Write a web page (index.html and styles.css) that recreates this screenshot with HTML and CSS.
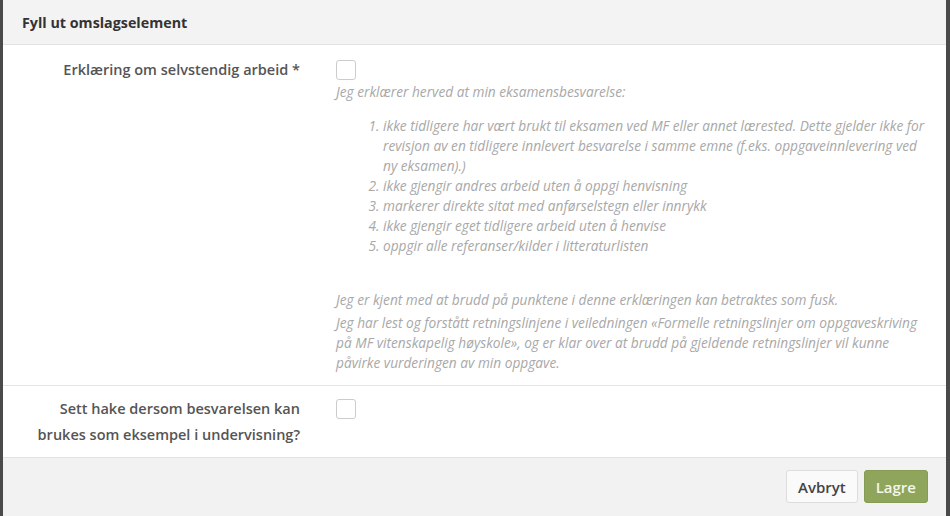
FILE: index.html
```html
<!DOCTYPE html>
<html lang="no">
<head>
  <meta charset="UTF-8">
  <meta name="viewport" content="width=device-width, initial-scale=1">
  <title>Fyll ut omslagselement</title>
  <link rel="stylesheet" href="styles.css">
</head>
<body>

  <div class="modal">
    <div class="modal-header">
      <h4>Fyll ut omslagselement</h4>
    </div>

    <div class="modal-body">
      <div class="form-row first">
        <label class="form-label">Erklæring om selvstendig arbeid *</label>
        <div class="form-field">
          <span class="checkbox"></span>
          <div class="help">
            <p>Jeg erklærer herved at min eksamensbesvarelse:</p>
            <ol>
              <li>ikke tidligere har vært brukt til eksamen ved MF eller annet lærested. Dette gjelder ikke for revisjon av en tidligere innlevert besvarelse i samme emne (f.eks. oppgaveinnlevering ved ny eksamen).)</li>
              <li>ikke gjengir andres arbeid uten å oppgi henvisning</li>
              <li>markerer direkte sitat med anførselstegn eller innrykk</li>
              <li>ikke gjengir eget tidligere arbeid uten å henvise</li>
              <li>oppgir alle referanser/kilder i litteraturlisten</li>
            </ol>
            <p class="note">Jeg er kjent med at brudd på punktene i denne erklæringen kan betraktes som fusk.</p>
            <p>Jeg har lest og forstått retningslinjene i veiledningen «Formelle retningslinjer om oppgaveskriving på MF vitenskapelig høyskole», og er klar over at brudd på gjeldende retningslinjer vil kunne påvirke vurderingen av min oppgave.</p>
          </div>
        </div>
      </div>

      <div class="form-row second">
        <label class="form-label">Sett hake dersom besvarelsen kan brukes som eksempel i undervisning?</label>
        <div class="form-field">
          <span class="checkbox"></span>
        </div>
      </div>
    </div>

    <div class="modal-footer">
      <button class="btn">Avbryt</button>
      <button class="btn btn-primary">Lagre</button>
    </div>
  </div>

</body>
</html>
```

FILE: styles.css
```css
html, body {
  margin: 0;
  height: 100%;
}
body {
  background-color: #4a4a4a;
  font-family: "Open Sans", Arial, sans-serif;
  overflow: hidden;
}
.modal {
  margin-left: 3px;
  width: 943px;
  height: 516px;
  background-color: #fff;
  display: flex;
  flex-direction: column;
}
.modal-header {
  height: 45px;
  box-sizing: border-box;
  background-color: #f3f3f3;
  border-bottom: 1px solid #e2e2e2;
  display: flex;
  align-items: center;
  padding-left: 19px;
}
.modal-header h4 {
  margin: 0;
  font-size: 14.3px;
  font-weight: 700;
  color: #333;
}
.modal-body {
  flex: 1;
}
.form-row {
  display: grid;
  grid-template-columns: 313px 1fr;
}
.form-row.first {
  padding: 15px 0 12px;
  border-bottom: 1px solid #e5e5e5;
}
.form-row.second {
  padding: 13px 0 0;
}
.form-label {
  text-align: right;
  padding: 0 16px 0 30px;
  margin-top: -3px;
  font-size: 14.5px;
  line-height: 26px;
  font-weight: 600;
  color: #555;
}
.form-field {
  padding: 0 12px 0 20px;
}
.checkbox {
  display: block;
  width: 18px;
  height: 18px;
  border: 1px solid #ccc;
  border-radius: 3px;
  background-color: #fff;
}
.help {
  margin-top: 2px;
  font-size: 13.7px;
  line-height: 20px;
  font-style: italic;
  color: #a8a8a8;
}
.help p {
  margin: 0;
}
.help ol {
  margin: 14px 0 34px;
  padding-left: 47px;
}
.help .note {
  margin-bottom: 3px;
}
.modal-footer {
  height: 59px;
  box-sizing: border-box;
  background-color: #f2f2f2;
  border-top: 1px solid #e2e2e2;
  display: flex;
  justify-content: flex-end;
  align-items: flex-start;
  gap: 6px;
  padding: 12px 18px 0 0;
}
.btn {
  margin: 0;
  height: 33px;
  padding: 0 11px;
  font-family: "Open Sans", Arial, sans-serif;
  font-size: 15px;
  font-weight: 600;
  color: #444;
  background-color: #fafafa;
  border: 1px solid #ddd;
  border-radius: 3px;
}
.btn-primary {
  color: #f4f6ea;
  background-color: #8fa55b;
  border-color: #869b53;
}
```
